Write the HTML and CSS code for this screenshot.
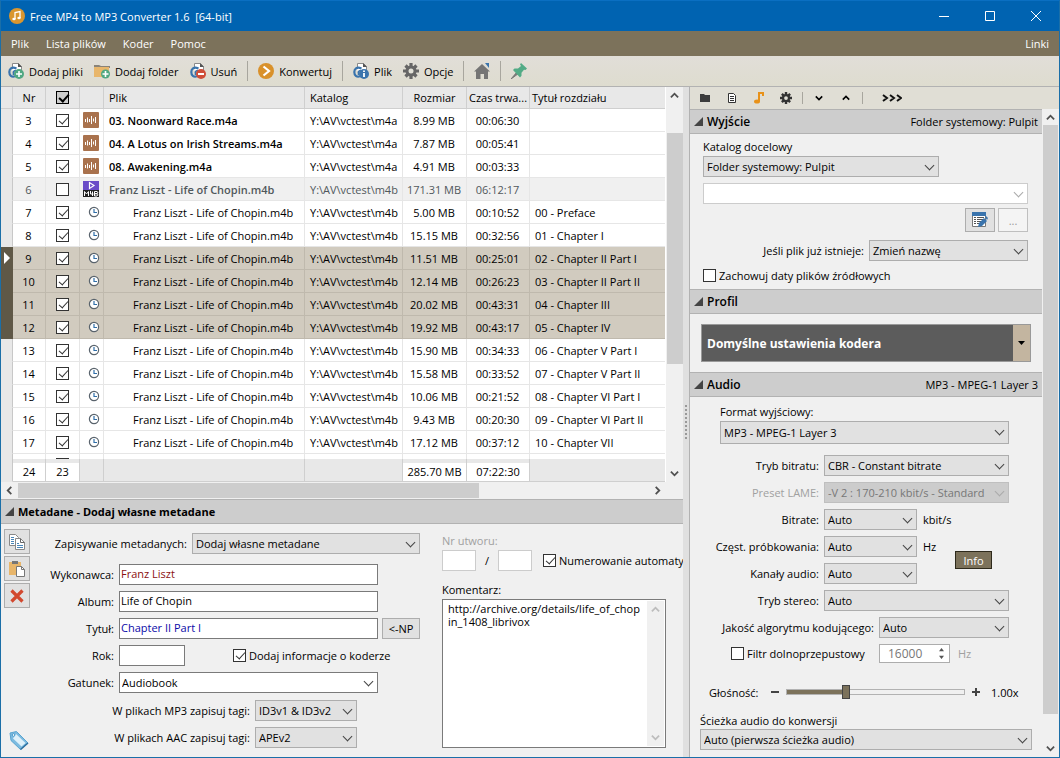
FILE: index.html
```html
<!DOCTYPE html>
<html lang="pl">
<head>
  <meta charset="UTF-8">
  <meta name="viewport" content="width=device-width, initial-scale=1.0">
  <title>Free MP4 to MP3 Converter 1.6 [64-bit]</title>
  <link rel="stylesheet" href="styles.css">
</head>
<body>

<!-- Shared icon shapes -->
<svg class="defs" aria-hidden="true">
  <symbol id="i-up" viewBox="0 0 10 10"><path d="M1 7l4-4 4 4" fill="none" stroke="currentColor" stroke-width="2"/></symbol>
  <symbol id="i-down" viewBox="0 0 10 10"><path d="M1 3l4 4 4-4" fill="none" stroke="currentColor" stroke-width="2"/></symbol>
  <symbol id="i-left" viewBox="0 0 10 10"><path d="M7 1L3 5l4 4" fill="none" stroke="currentColor" stroke-width="2"/></symbol>
  <symbol id="i-right" viewBox="0 0 10 10"><path d="M3 1l4 4-4 4" fill="none" stroke="currentColor" stroke-width="2"/></symbol>
  <symbol id="i-file" viewBox="0 0 16 16">
    <path d="M4.500 6V.5h6l3 3V9h-9" fill="#fff" stroke="#8a8a8a" stroke-width="1"/>
    <path d="M10 0v4h4z" fill="#555"/>
    <path d="M8.500 5.500C4 3.500 1.300 5.500 1.300 9s2.200 5.300 5.700 4.300" fill="none" stroke="#3a74ad" stroke-width="2.200"/>
    <path d="M5.500 12V9.500C5.500 8 6.500 7.500 8 7.500" fill="none" stroke="#3a74ad" stroke-width="1.600"/>
  </symbol>
  <symbol id="i-gear" viewBox="0 0 16 16">
    <g stroke="currentColor" stroke-width="3.200"><path d="M8 0v16M0 8h16M2.500 2.500l11 11M13.500 2.500l-11 11"/></g>
    <circle cx="8" cy="8" r="5.500" fill="currentColor"/><circle cx="8" cy="8" r="2.500" fill="#e2e1d8"/>
  </symbol>
  <symbol id="i-wave" viewBox="0 0 16 16">
    <rect width="16" height="16" rx="1" fill="#a9724d"/>
    <path d="M2.500 7v3M4.500 5.500v5M6.500 7v3M8.500 4v8M10.500 6.500v3M12.500 5v6" stroke="#fff" stroke-width="1"/>
  </symbol>
  <symbol id="i-m4b" viewBox="0 0 16 16">
    <path d="M0 0h16v9H0z" fill="#6a4cc8"/><path d="M0 9h16v7H0z" fill="#222"/>
    <path d="M6.500 1.500v6L11 4.500z" fill="none" stroke="#fff" stroke-width="1.200"/>
    <path d="M1.500 15v-4.500l2 2.500 2-2.500V15M7.500 10v3h3M9.500 10.500V15M11.500 10.500V15H14l.8-.8v-.8l-.8-.7h-2.500H14l.8-.7v-.8l-.8-.7z" fill="none" stroke="#fff"/>
  </symbol>
  <symbol id="i-clock" viewBox="0 0 12 12">
    <circle cx="6" cy="6" r="4.600" fill="#fff" stroke="#59636c" stroke-width="1.200"/>
    <path d="M6 3v3.500h3" fill="none" stroke="#2f6ea8" stroke-width="1.200"/>
  </symbol>
</svg>

<div class="window">
  <header class="titlebar">
    <svg class="app-icon" viewBox="0 0 16 16"><circle cx="8" cy="8" r="8" fill="#d9962f"/><path d="M6 11V4.500l5-1V10" fill="none" stroke="#fff" stroke-width="1.300"/><ellipse cx="5" cy="11" rx="1.700" ry="1.300" fill="#fff"/><ellipse cx="10" cy="10" rx="1.700" ry="1.300" fill="#fff"/></svg>
    <h1>Free MP4 to MP3 Converter 1.6&nbsp; [64-bit]</h1>
    <button class="caption" aria-label="Minimalizuj"><svg viewBox="0 0 10 10"><path d="M0 5.500h10" stroke="#fff"/></svg></button>
    <button class="caption" aria-label="Maksymalizuj"><svg viewBox="0 0 10 10"><path d="M.5.5h9v9h-9z" fill="none" stroke="#fff"/></svg></button>
    <button class="caption" aria-label="Zamknij"><svg viewBox="0 0 10 10"><path d="M0 0l10 10M10 0L0 10" stroke="#fff"/></svg></button>
  </header>

  <nav class="menu">
    <a href="#">Plik</a>
    <a href="#">Lista plików</a>
    <a href="#">Koder</a>
    <a href="#">Pomoc</a>
    <a href="#" class="push">Linki</a>
  </nav>

  <div class="toolbar">
    <button><svg viewBox="0 0 16 16"><use href="#i-file"/><circle cx="11" cy="11" r="5" fill="#50a882"/><path d="M11 8v6M8 11h6" stroke="#fff" stroke-width="1.600"/></svg>Dodaj pliki</button>
    <button><svg viewBox="0 0 16 16"><path d="M0 2h5l2 1h9v2H0z" fill="#8a8378"/><path d="M0 4h15v10H0z" fill="#e8b66b"/><circle cx="11.500" cy="11" r="4.500" fill="#50a882"/><path d="M11.500 8v6M8.500 11h6" stroke="#fff" stroke-width="1.600"/></svg>Dodaj folder</button>
    <button><svg viewBox="0 0 16 16"><use href="#i-file"/><circle cx="11" cy="11" r="5" fill="#cf4d38"/><path d="M8 11h6" stroke="#fff" stroke-width="2"/></svg>Usuń</button>
    <span class="sep"></span>
    <button><svg viewBox="0 0 16 16"><circle cx="8" cy="8" r="8" fill="#d9912b"/><path d="M5.500 3.500L11 8l-5.500 4.500" fill="none" stroke="#fff" stroke-width="2.200"/></svg>Konwertuj</button>
    <span class="sep"></span>
    <button><svg viewBox="0 0 16 16"><use href="#i-file"/><circle cx="11" cy="11" r="5" fill="#3a74ad"/><path d="M11 10v4M11 7.500v1.500" stroke="#fff" stroke-width="1.800"/></svg>Plik</button>
    <button><svg class="grey" viewBox="0 0 16 16"><use href="#i-gear"/></svg>Opcje</button>
    <span class="sep"></span>
    <button aria-label="Strona domowa"><svg viewBox="0 0 16 16"><path d="M11 0h4v5z" fill="#3a74ad"/><path d="M8 1l8 7.500h-2V16h-4v-5H6.500v5H2V8.500H0z" fill="#757575"/></svg></button>
    <span class="sep"></span>
    <button aria-label="Przypnij"><svg viewBox="0 0 16 16"><path d="M0 16l6-7 1.500 1.500z" fill="#777" stroke="#777"/><path d="M10 0l6 5.500-1.500 1.500-1.500-.3-2.500 3v3L9 14.500 2 7l1.500-1.500H7l3-2.500L9 1.500z" fill="#52ab86"/></svg></button>
  </div>

  <div class="main">
    <main class="left">
      <div class="list">
        <table class="files">
          <colgroup>
            <col class="c-mark"><col class="c-nr"><col class="c-check"><col class="c-icon"><col class="c-file"><col class="c-dir"><col class="c-size"><col class="c-time"><col>
          </colgroup>
          <thead>
            <tr>
              <th></th><th>Nr</th>
              <th><input type="checkbox" class="all" aria-label="Zaznacz wszystko" checked></th>
              <th></th><th class="text">Plik</th><th class="text">Katalog</th><th>Rozmiar</th><th class="long">Czas trwa...</th><th class="long">Tytuł rozdziału</th>
            </tr>
          </thead>
          <tbody id="rows"></tbody>
          <tfoot>
            <tr>
              <td></td><td><span>24</span></td><td><span>23</span></td><td></td><td></td><td></td><td><span>285.70 MB</span></td><td><span>07:22:30</span></td><td></td>
            </tr>
          </tfoot>
        </table>
        <div class="vscroll">
          <svg><use href="#i-up"/></svg>
          <div class="track"><div class="thumb list-thumb"></div></div>
          <svg><use href="#i-down"/></svg>
        </div>
      </div>
      <div class="hscroll">
        <svg><use href="#i-left"/></svg>
        <div class="track"><div class="thumb"></div></div>
        <svg><use href="#i-right"/></svg>
      </div>

      <section class="meta">
        <h2 class="bar"><i></i>Metadane - Dodaj własne metadane</h2>
        <div class="meta-body">
          <div class="meta-tools">
            <button aria-label="Kopiuj"><svg viewBox="0 0 16 16"><g fill="#fff" stroke="#888"><path d="M.5.5h6l3 3v8h-9z"/><path d="M6.500 4.500h5l4 4v7h-9z"/></g><path d="M11.500 4.500v4h4" fill="none" stroke="#666"/><path d="M2 3.500h3M2 5.500h3M2 7.500h3M2 9.500h3M8 9.500h2M8 11.500h6M8 13.500h6" stroke="#4a86b8"/></svg></button>
            <button aria-label="Wklej"><svg viewBox="0 0 16 16"><path d="M0 1h12v13H0z" fill="#e8b66b"/><path d="M3 0h6v3H3z" fill="#777"/><path d="M7.500 5.500h5l3 3v7h-8z" fill="#fff" stroke="#777"/><path d="M12.500 5.500v3h3" fill="none" stroke="#777"/></svg></button>
            <button aria-label="Wyczyść"><svg viewBox="0 0 16 16"><path d="M2.500 2.500l11 11M13.500 2.500l-11 11" stroke="#d2492f" stroke-width="3.200"/></svg></button>
            <svg class="tag" viewBox="0 0 20 20"><path d="M1 3l6.500-1.500L19 13l-7.500 6.500L2 10.500z" fill="#7dbbe0" stroke="#5aa5d0"/><path d="M7 4l9.500 9-4 3.500L4 8.500z" fill="#dff1fa"/><path d="M11.500 19.500L19 13" stroke="#2d6f9f" stroke-width="1.500"/><circle cx="4.500" cy="5" r="1.300" fill="#fff" stroke="#4b9ccb"/></svg>
          </div>

          <form class="meta-form">
            <div class="row mode">
              <label for="mode">Zapisywanie metadanych:</label>
              <span class="combo"><select id="mode"><option>Dodaj własne metadane</option></select></span>
            </div>
            <div class="row">
              <label for="artist">Wykonawca:</label>
              <input type="text" id="artist" class="red" value="Franz Liszt">
            </div>
            <div class="row">
              <label for="album">Album:</label>
              <input type="text" id="album" value="Life of Chopin">
            </div>
            <div class="row">
              <label for="title">Tytuł:</label>
              <input type="text" id="title" class="blue" value="Chapter II Part I">
              <button type="button" class="btn np">&lt;-NP</button>
            </div>
            <div class="row">
              <label for="year">Rok:</label>
              <input type="text" id="year">
              <label class="check encoder"><input type="checkbox" checked>Dodaj informacje o koderze</label>
            </div>
            <div class="row">
              <label for="genre">Gatunek:</label>
              <span class="combo white genre"><select id="genre"><option>Audiobook</option></select></span>
            </div>
            <div class="row tags first">
              <label for="mp3tags">W plikach MP3 zapisuj tagi:</label>
              <span class="combo"><select id="mp3tags"><option>ID3v1 &amp; ID3v2</option></select></span>
            </div>
            <div class="row tags">
              <label for="aactags">W plikach AAC zapisuj tagi:</label>
              <span class="combo"><select id="aactags"><option>APEv2</option></select></span>
            </div>
          </form>

          <div class="meta-side">
            <label for="track" class="dim">Nr utworu:</label>
            <div class="tracks">
              <input type="text" id="track" disabled>
              <span>/</span>
              <input type="text" aria-label="Liczba utworów" disabled>
              <label class="check"><input type="checkbox" checked>Numerowanie automaty</label>
            </div>
            <label for="comment">Komentarz:</label>
            <div class="comment">
              <textarea id="comment">http://archive.org/details/life_of_chopin_1408_librivox</textarea>
              <div class="vscroll off">
                <svg><use href="#i-up"/></svg>
                <div class="track"></div>
                <svg><use href="#i-down"/></svg>
              </div>
            </div>
          </div>
        </div>
      </section>
    </main>

    <div class="splitter"><span></span></div>

    <aside class="right">
      <div class="side-tools">
        <button aria-label="Wyjście"><svg viewBox="0 0 12 12"><path d="M1 2h4l1 1h5v7H1z" fill="#3c3c3c"/></svg></button>
        <button aria-label="Profil"><svg viewBox="0 0 12 12"><path d="M2.500 1.500h5l2 2v7h-7z" fill="#fff" stroke="#333"/><path d="M4 4.500h4M4 6.500h4M4 8.500h4" stroke="#333"/></svg></button>
        <button aria-label="Audio"><svg viewBox="0 0 12 12"><path d="M6 9.500V1h4v3" fill="none" stroke="#e8921a" stroke-width="2"/><ellipse cx="4" cy="9.500" rx="3" ry="2" fill="#e8921a"/></svg></button>
        <button aria-label="Opcje"><svg class="dark" viewBox="0 0 16 16"><use href="#i-gear"/></svg></button>
        <span class="sep"></span>
        <button aria-label="Rozwiń"><svg class="small"><use href="#i-down"/></svg></button>
        <button aria-label="Zwiń"><svg class="small"><use href="#i-up"/></svg></button>
        <span class="sep"></span>
        <button class="more" aria-label="Więcej"><svg viewBox="0 0 20 8"><path d="M1 1l4 3-4 3M8 1l4 3-4 3M15 1l4 3-4 3" fill="none" stroke="#111" stroke-width="2"/></svg></button>
      </div>

      <div class="side-view">
        <div class="side-body">
          <section>
            <h2 class="bar"><i></i>Wyjście<span>Folder systemowy: Pulpit</span></h2>
            <div class="output">
              <label for="dir">Katalog docelowy</label>
              <span class="combo dir"><select id="dir"><option>Folder systemowy: Pulpit</option></select></span>
              <span class="combo white off path"><select aria-label="Ścieżka" disabled><option></option></select></span>
              <div class="out-buttons">
                <button class="btn" aria-label="Edytuj"><svg viewBox="0 0 16 16"><path d="M.5.5h13v14H.5z" fill="#fff" stroke="#777"/><path d="M0 0h14v4H0z" fill="#3a74ad"/><path d="M2 5.500h2M5 5.500h7M2 7.500h2M5 7.500h7M2 9.500h2M5 9.500h5M2 11.500h2M5 11.500h3" stroke="#555"/><path d="M6 15l1-4 5-5 3 3-5 5z" fill="#3a74ad"/><path d="M13 5l1-1 2 2-1 2z" fill="#3a74ad"/></svg></button>
                <button class="btn off" disabled>...</button>
              </div>
              <div class="exists">
                <label for="exists">Jeśli plik już istnieje:</label>
                <span class="combo"><select id="exists"><option>Zmień nazwę</option></select></span>
              </div>
              <label class="check"><input type="checkbox">Zachowuj daty plików źródłowych</label>
            </div>
          </section>

          <section>
            <h2 class="bar"><i></i>Profil</h2>
            <div class="profile">
              <button class="preset">Domyślne ustawienia kodera</button>
              <button class="preset-menu" aria-label="Wybierz profil"></button>
            </div>
          </section>

          <section>
            <h2 class="bar"><i></i>Audio<span>MP3 - MPEG-1 Layer 3</span></h2>
            <div class="audio">
              <div class="format">
                <label for="format">Format wyjściowy:</label>
                <span class="combo tall"><select id="format"><option>MP3 - MPEG-1 Layer 3</option></select></span>
              </div>
              <div class="grid">
                <label for="brmode">Tryb bitratu:</label>
                <span class="combo wide"><select id="brmode"><option>CBR - Constant bitrate</option></select></span>
                <label for="lame" class="dim">Preset LAME:</label>
                <span class="combo wide disabled"><select id="lame" disabled><option>-V 2 : 170-210 kbit/s - Standard</option></select></span>
                <label for="bitrate">Bitrate:</label>
                <span class="combo"><select id="bitrate"><option>Auto</option></select></span>
                <span class="unit">kbit/s</span>
                <label for="rate">Częst. próbkowania:</label>
                <span class="combo"><select id="rate"><option>Auto</option></select></span>
                <span class="unit">Hz</span>
                <button class="info">Info</button>
                <label for="channels">Kanały audio:</label>
                <span class="combo"><select id="channels"><option>Auto</option></select></span>
                <label for="stereo">Tryb stereo:</label>
                <span class="combo wide"><select id="stereo"><option>Auto</option></select></span>
              </div>
              <div class="quality">
                <label for="quality">Jakość algorytmu kodującego:</label>
                <span class="combo"><select id="quality"><option>Auto</option></select></span>
              </div>
              <div class="filter">
                <label class="check"><input type="checkbox">Filtr dolnoprzepustowy</label>
                <span class="spin"><input type="text" aria-label="Częstotliwość" value="16000" disabled><i></i></span>
                <span class="dim">Hz</span>
              </div>
              <div class="volume">
                <label for="volume">Głośność:</label>
                <svg viewBox="0 0 8 8"><path d="M0 4h8" stroke="#444" stroke-width="2"/></svg>
                <input type="range" id="volume" min="0" max="310" value="100">
                <svg viewBox="0 0 8 8"><path d="M0 4h8M4 0v8" stroke="#444" stroke-width="2"/></svg>
                <span>1.00x</span>
              </div>
              <div class="source">
                <label for="source">Ścieżka audio do konwersji</label>
                <span class="combo"><select id="source"><option>Auto (pierwsza ścieżka audio)</option></select></span>
              </div>
            </div>
          </section>
        </div>
        <div class="vscroll">
          <svg><use href="#i-up"/></svg>
          <div class="track"><div class="thumb side-thumb"></div></div>
          <svg><use href="#i-down"/></svg>
        </div>
      </div>
    </aside>
  </div>
</div>

<script>
  const book = "Franz Liszt - Life of Chopin.m4b";
  const files = [
    [3, "wave", "03. Noonward Race.m4a", "Y:\\AV\\vctest\\m4a", "8.99 MB", "00:06:30", ""],
    [4, "wave", "04. A Lotus on Irish Streams.m4a", "Y:\\AV\\vctest\\m4a", "7.87 MB", "00:05:41", ""],
    [5, "wave", "08. Awakening.m4a", "Y:\\AV\\vctest\\m4a", "4.91 MB", "00:03:33", ""],
    [6, "m4b", book, "Y:\\AV\\vctest\\m4b", "171.31 MB", "06:12:17", ""],
    [7, "clock", book, "Y:\\AV\\vctest\\m4b", "5.00 MB", "00:10:52", "00 - Preface"],
    [8, "clock", book, "Y:\\AV\\vctest\\m4b", "15.15 MB", "00:32:56", "01 - Chapter I"],
    [9, "clock", book, "Y:\\AV\\vctest\\m4b", "11.51 MB", "00:25:01", "02 - Chapter II Part I"],
    [10, "clock", book, "Y:\\AV\\vctest\\m4b", "12.14 MB", "00:26:23", "03 - Chapter II Part II"],
    [11, "clock", book, "Y:\\AV\\vctest\\m4b", "20.02 MB", "00:43:31", "04 - Chapter III"],
    [12, "clock", book, "Y:\\AV\\vctest\\m4b", "19.92 MB", "00:43:17", "05 - Chapter IV"],
    [13, "clock", book, "Y:\\AV\\vctest\\m4b", "15.90 MB", "00:34:33", "06 - Chapter V Part I"],
    [14, "clock", book, "Y:\\AV\\vctest\\m4b", "15.58 MB", "00:33:52", "07 - Chapter V Part II"],
    [15, "clock", book, "Y:\\AV\\vctest\\m4b", "10.06 MB", "00:21:52", "08 - Chapter VI Part I"],
    [16, "clock", book, "Y:\\AV\\vctest\\m4b", "9.43 MB", "00:20:30", "09 - Chapter VI Part II"],
    [17, "clock", book, "Y:\\AV\\vctest\\m4b", "17.12 MB", "00:37:12", "10 - Chapter VII"]
  ];

  let html = "";
  for (const [nr, icon, file, dir, size, time, title] of files) {
    const selected = nr >= 9 && nr <= 12 ? " selected" : "";
    html += `<tr class="${icon}${selected}">
      <td>${nr === 9 ? '<i class="cursor"></i>' : ""}</td>
      <td>${nr}</td>
      <td><input type="checkbox" aria-label="Plik ${nr}"${icon === "m4b" ? "" : " checked"}></td>
      <td><svg><use href="#i-${icon}"/></svg></td>
      <td class="text name">${file}</td>
      <td class="text">${dir}</td>
      <td>${size}</td>
      <td>${time}</td>
      <td class="text">${title}</td>
    </tr>`;
  }
  // the next row is only partly scrolled into view
  html += `<tr class="cut"><td></td><td></td><td><div><input type="checkbox" aria-label="Plik 18" checked></div></td>${"<td></td>".repeat(6)}</tr>`;
  document.getElementById("rows").innerHTML = html;
</script>

</body>
</html>
```
FILE: styles.css
```css
* {
  box-sizing: border-box;
}

body {
  margin: 0;
  font: 11px/15px "Open Sans", "Noto Sans", sans-serif;
  color: #000;
  background: #f0f0f0;
}

button,
input,
select,
textarea {
  font: inherit;
  color: inherit;
  margin: 0;
  border-radius: 0;
}

button {
  padding: 0;
  border: 0;
  background: none;
}

svg {
  display: block;
  flex: none;
}

.defs {
  position: absolute;
  width: 0;
  height: 0;
}

.window {
  display: flex;
  flex-direction: column;
  min-height: 100vh;
  border: 1px solid #1b6fa8;
  border-top-color: #0a6fc2;
}

/* Title bar, menu, toolbar */
.titlebar {
  display: flex;
  align-items: center;
  height: 30px;
  padding-left: 8px;
  background: #0063b1;
  color: #fff;
}

.app-icon {
  width: 16px;
  height: 16px;
}

.titlebar h1 {
  flex: 1;
  margin: 0 0 0 5px;
  font-size: 11px;
  font-weight: normal;
}

.caption {
  display: flex;
  justify-content: center;
  width: 46px;
}

.caption svg {
  width: 10px;
  height: 10px;
}

.menu {
  display: flex;
  align-items: center;
  gap: 17px;
  height: 25px;
  padding: 0 10px;
  background: #7c725b;
}

.menu a {
  color: #fff;
  text-decoration: none;
}

.menu .push {
  margin-left: auto;
}

.toolbar {
  display: flex;
  align-items: center;
  gap: 11px;
  height: 30px;
  padding: 0 7px;
  background: linear-gradient(#e1ded8, #dedccf);
}

.toolbar button {
  display: flex;
  align-items: center;
  gap: 5px;
}

.toolbar svg {
  width: 16px;
  height: 16px;
}

.grey {
  color: #666;
}

.sep {
  width: 1px;
  height: 20px;
  background: #a8a69e;
}

.toolbar .sep {
  margin: 0 -1px;
}

/* Main split */
.main {
  display: flex;
  flex: 1;
  border-top: 1px solid #b2b2b2;
}

.left {
  display: flex;
  flex-direction: column;
  flex: 1;
  min-width: 0;
}

.splitter {
  display: flex;
  align-items: center;
  justify-content: center;
  width: 6px;
  background: #e0e0e0;
}

.splitter span {
  width: 2px;
  height: 34px;
  background: repeating-linear-gradient(#999 0 2px, transparent 2px 4px);
}

.right {
  display: flex;
  flex-direction: column;
  width: 370px;
  border-left: 1px solid #b2b2b2;
}

/* File list */
.list {
  display: flex;
  flex: 1;
}

.files {
  flex: 1;
  width: 0;
  table-layout: fixed;
  border-spacing: 0;
  border-right: 1px solid #fff;
  background: #fff;
  white-space: nowrap;
}

.c-mark { width: 12px; }
.c-nr { width: 33px; }
.c-check { width: 34px; }
.c-icon { width: 24px; }
.c-file { width: 201px; }
.c-dir { width: 98px; }
.c-size { width: 64px; }
.c-time { width: 63px; }

.files th,
.files td {
  height: 23px;
  padding: 0;
  overflow: hidden;
  border-right: 1px solid #e6e6e6;
  border-bottom: 1px solid #e6e6e6;
  font-weight: normal;
  text-align: center;
}

.files tbody td {
  padding-right: 1px;
}

.files thead th {
  height: 22px;
  background: #e8e8e8;
  border-color: #cfcfcf;
}

.files th:last-child,
.files td:last-child {
  border-right: 0;
}

.files td:first-child {
  background: #e8e8e8;
  border-right-color: #c8c8c8;
  border-bottom-color: #e8e8e8;
}

.files .text {
  padding-left: 5px;
  text-align: left;
}

.files .long {
  padding-left: 2px;
  text-align: left;
}

.files input {
  display: block;
  margin: 0 auto;
}

.files svg {
  width: 16px;
  height: 16px;
  margin: 0 auto;
}

.files .clock svg {
  width: 12px;
  height: 12px;
  margin-right: 2px;
}

.wave .name,
.m4b .name {
  font-weight: 600;
}

.files .clock .name {
  padding-left: 29px;
}

.m4b td {
  background: #f0f0f0;
  color: #50585c;
}

.files .selected td {
  background: #d1cbbf;
  border-color: #bfb9ad;
}

.files .selected td:first-child {
  background: #5f5847;
  border-color: #5f5847;
}

.cursor {
  display: block;
  width: 6px;
  height: 12px;
  margin-left: 3px;
  background: #fff;
  clip-path: polygon(0 0, 100% 50%, 0 100%);
}

.files .cut td {
  height: 5px;
  border-bottom: 0;
}

.cut div {
  height: 5px;
  padding-top: 4px;
  overflow: hidden;
}

.files tfoot td {
  padding-top: 4px;
  background: #e8e8e8;
  border-color: #cfcfcf;
}

tfoot span {
  display: block;
  height: 18px;
  background: #fff;
  line-height: 18px;
}

/* Scroll bars */
.vscroll {
  display: flex;
  flex-direction: column;
  align-items: center;
  width: 17px;
  padding: 4px 0;
  background: #f0f0f0;
  color: #505050;
}

.vscroll svg,
.hscroll svg {
  width: 9px;
  height: 9px;
}

.vscroll .track {
  flex: 1;
  width: 100%;
  margin: 3px 0;
}

.thumb {
  background: #cdcdcd;
}

.list-thumb {
  height: 231px;
  margin-top: 30px;
  margin-left: 1px;
}

.side-thumb {
  height: 589px;
  width: 15px;
  margin-left: 1px;
}

.hscroll {
  display: flex;
  align-items: center;
  height: 17px;
  padding: 0 21px 0 4px;
  background: #f0f0f0;
  color: #505050;
}

.hscroll .track {
  flex: 1;
  margin: 0 4px;
}

.hscroll .thumb {
  width: 73%;
  height: 15px;
}

.vscroll.off {
  color: #bdbdbd;
}

/* Section headings */
.bar {
  display: flex;
  align-items: center;
  height: 25px;
  margin: 0;
  padding: 0 4px;
  border-top: 1px solid #b2b2b2;
  border-bottom: 1px solid #b2b2b2;
  background: #cdcdcd;
  font-size: 12px;
  font-weight: 600;
}

.meta .bar {
  font-size: 11px;
  font-weight: bold;
}

.bar i {
  width: 9px;
  height: 9px;
  margin-right: 4px;
  background: #444;
  clip-path: polygon(100% 0, 100% 100%, 0 100%);
}

.bar span {
  margin-left: auto;
  font-size: 11px;
  font-weight: normal;
}

/* Form controls */
.combo {
  display: block;
  position: relative;
  height: 21px;
}

.combo::after {
  content: "";
  position: absolute;
  top: 6px;
  right: 6px;
  width: 6px;
  height: 6px;
  border: solid #444;
  border-width: 0 1px 1px 0;
  transform: rotate(45deg);
  pointer-events: none;
}

.combo select {
  display: block;
  width: 100%;
  height: 100%;
  padding: 0 20px 0 3px;
  border: 1px solid #adadad;
  background: #e1e1e1;
  appearance: none;
}

.combo.tall {
  height: 23px;
}

.combo.white select {
  border-color: #7a7a7a;
  background: #fff;
  padding-left: 2px;
}

.combo.white.off select {
  border-color: #ccc;
  opacity: 1;
}

.combo.off::after,
.combo.disabled::after {
  border-color: #aaa;
}

.combo.disabled select {
  border-color: #bfbfbf;
  background: #ccc;
  color: #777;
  opacity: 1;
}

input[type="text"] {
  height: 21px;
  padding: 0 2px 2px 1px;
  border: 1px solid #7a7a7a;
  background: #fff;
}

input[type="text"]:disabled {
  border-color: #ccc;
}

input[type="checkbox"] {
  display: block;
  position: relative;
  flex: none;
  width: 13px;
  height: 13px;
  border: 1px solid #333;
  background: #fff;
  appearance: none;
}

input[type="checkbox"]:checked::after {
  content: "";
  position: absolute;
  top: 0;
  left: 4px;
  width: 4px;
  height: 8px;
  border: solid #333;
  border-width: 0 1px 1px 0;
  transform: rotate(42deg);
}

input[type="checkbox"].all {
  background: #ccc;
  border-color: #000;
}

input[type="checkbox"].all:checked::after {
  border-color: #000;
  border-width: 0 2px 2px 0;
}

.check {
  display: flex;
  align-items: center;
  gap: 3px;
  white-space: nowrap;
}

.btn {
  display: flex;
  align-items: center;
  justify-content: center;
  border: 1px solid #adadad;
  background: #e1e1e1;
}

.dim {
  color: #a0a0a0;
}

.red {
  color: #8b1010;
}

.blue {
  color: #0a0aa8;
}

/* Metadata */
.meta-body {
  display: flex;
}

.meta-tools {
  display: flex;
  flex-direction: column;
  gap: 2px;
  padding: 5px 0 7px 3px;
}

.meta-tools button {
  display: flex;
  align-items: center;
  justify-content: center;
  width: 26px;
  height: 25px;
  border: 1px solid #adadad;
  background: #e1e1e1;
}

.meta-tools button svg {
  width: 16px;
  height: 16px;
}

.tag {
  width: 20px;
  height: 20px;
  margin: auto auto 0 5px;
}

.meta-form {
  display: flex;
  flex-direction: column;
  gap: 6px;
  width: 390px;
  padding-top: 9px;
}

.row {
  display: flex;
  align-items: center;
  height: 21px;
}

.row > label:first-child {
  width: 84px;
  margin-right: 5px;
  text-align: right;
}

.row.mode {
  margin-bottom: 4px;
}

.row.mode > label {
  width: 157px;
}

.row.mode .combo {
  width: 228px;
}

.row input[type="text"],
.genre {
  width: 259px;
}

.row #year {
  width: 66px;
}

.np {
  width: 38px;
  height: 21px;
  margin-left: 4px;
}

.encoder {
  margin-left: 48px;
}

.row.tags.first {
  margin-top: 1px;
}

.row.tags > label {
  width: 220px;
}

.row.tags .combo {
  width: 102px;
}

.meta-side {
  flex: 1;
  min-width: 0;
  padding: 9px 0 9px 22px;
}

.meta-side > label {
  display: block;
}

.tracks {
  display: flex;
  align-items: center;
  height: 21px;
  margin: 2px 0 11px;
}

.tracks input[type="text"] {
  flex: none;
  width: 34px;
}

.tracks span {
  flex: none;
  width: 22px;
  text-align: center;
}

.tracks .check {
  margin-left: 11px;
}

.comment {
  display: flex;
  height: 149px;
  margin: 2px 17px 0 0;
  padding: 1px;
  border: 1px solid #7a7a7a;
  background: #fff;
}

.comment textarea {
  flex: 1;
  min-width: 0;
  padding: 1px 5px 1px 4px;
  border: 0;
  background: none;
  line-height: 13px;
  word-break: break-all;
  resize: none;
  overflow: hidden;
}

/* Right pane */
.side-tools {
  display: flex;
  align-items: center;
  gap: 15px;
  height: 22px;
  padding-left: 9px;
  background: #e0ded5;
}

.side-tools svg {
  width: 12px;
  height: 12px;
}

.side-tools .small {
  width: 8px;
  height: 8px;
  margin: 0 2px;
}

.side-tools .sep {
  height: 12px;
  margin: 0 -5px;
}

.side-tools .more svg {
  width: 20px;
  height: 8px;
  margin-left: 9px;
}

.dark {
  color: #333;
}

.side-view {
  display: flex;
  flex: 1;
}

.side-body {
  flex: 1;
}

.output {
  display: flex;
  flex-direction: column;
  align-items: flex-start;
  height: 155px;
  padding: 5px 14px 0 13px;
}

.dir {
  width: 236px;
  margin: 2px 0 6px;
}

.path {
  align-self: stretch;
}

.out-buttons {
  display: flex;
  gap: 3px;
  align-self: flex-end;
  margin: 4px 0 8px;
}

.out-buttons .btn {
  width: 30px;
  height: 24px;
}

.out-buttons svg {
  width: 16px;
  height: 16px;
}

.btn.off {
  border-color: #bfbfbf;
  background: #f4f4f4;
  color: #999;
}

.exists {
  display: flex;
  align-items: center;
  align-self: flex-end;
  gap: 5px;
  margin-bottom: 7px;
}

.exists .combo {
  width: 159px;
}

.profile {
  display: flex;
  height: 38px;
  margin: 10px 11px;
  border: 1px solid #999;
}

.preset {
  flex: 1;
  padding-left: 5px;
  background: #5c5c5c;
  color: #fff;
  font-size: 12px;
  font-weight: bold;
  text-align: left;
}

.preset-menu {
  width: 17px;
  background: #c3b5a0;
}

.preset-menu::after {
  content: "";
  display: block;
  width: 7px;
  height: 4px;
  margin: 0 auto;
  background: #000;
  clip-path: polygon(0 0, 100% 0, 50% 100%);
}

.audio {
  padding: 7px 10px;
}

.format {
  padding: 0 23px 0 20px;
}

.format .combo {
  margin-top: 2px;
}

.grid {
  display: grid;
  grid-template-columns: 124px 93px 1fr 37px 17px;
  grid-auto-rows: 21px;
  gap: 6px 0;
  align-items: center;
  margin: 11px 23px 6px 0;
}

.grid label {
  grid-column: 1;
  padding-right: 5px;
  text-align: right;
}

.grid .wide {
  grid-column: 2 / -1;
}

.unit {
  grid-column: 3;
  padding-left: 6px;
}

.info {
  grid-area: 4 / 4 / 6 / 5;
  height: 18px;
  border: 1px solid #2e2a1c;
  background: #7c725b;
  color: #fff;
}

.quality {
  display: flex;
  align-items: center;
  justify-content: flex-end;
  gap: 5px;
  margin-right: 23px;
}

.quality .combo {
  width: 130px;
}

.filter {
  display: flex;
  align-items: center;
  margin: 6px 0 19px 31px;
}

.filter .check {
  width: 148px;
}

.spin {
  display: flex;
  align-items: center;
  width: 71px;
  height: 19px;
  margin-right: 8px;
  border: 1px solid #adadad;
  background: #fff;
}

.spin input[type="text"] {
  flex: 1;
  min-width: 0;
  height: 17px;
  padding: 0 0 0 8px;
  border: 0;
  color: #777;
  font-size: 12px;
}

.spin i {
  width: 5px;
  height: 11px;
  margin-right: 5px;
  background: #555;
  clip-path: polygon(50% 0, 100% 30%, 0 30%, 0 70%, 100% 70%, 50% 100%, 0 70%, 0 30%);
}

.volume {
  display: flex;
  align-items: center;
  height: 20px;
  padding-left: 9px;
}

.volume label {
  width: 62px;
}

.volume svg {
  width: 8px;
  height: 8px;
}

.volume span {
  width: 41px;
  margin-left: 11px;
}

.volume input {
  flex: 1;
  min-width: 0;
  height: 14px;
  margin: 0 7px;
  background: linear-gradient(to right, #7c725b 33%, transparent 33%) center / 100% 6px no-repeat;
  appearance: none;
}

.volume input::-webkit-slider-runnable-track {
  height: 6px;
  border: 1px solid #b2b2b2;
}

.volume input::-webkit-slider-thumb {
  width: 8px;
  height: 14px;
  margin-top: -5px;
  border: 1px solid #444;
  background: #7c725b;
  appearance: none;
}

.source {
  margin-top: 11px;
}

.source .combo {
  margin-top: 1px;
}
```
